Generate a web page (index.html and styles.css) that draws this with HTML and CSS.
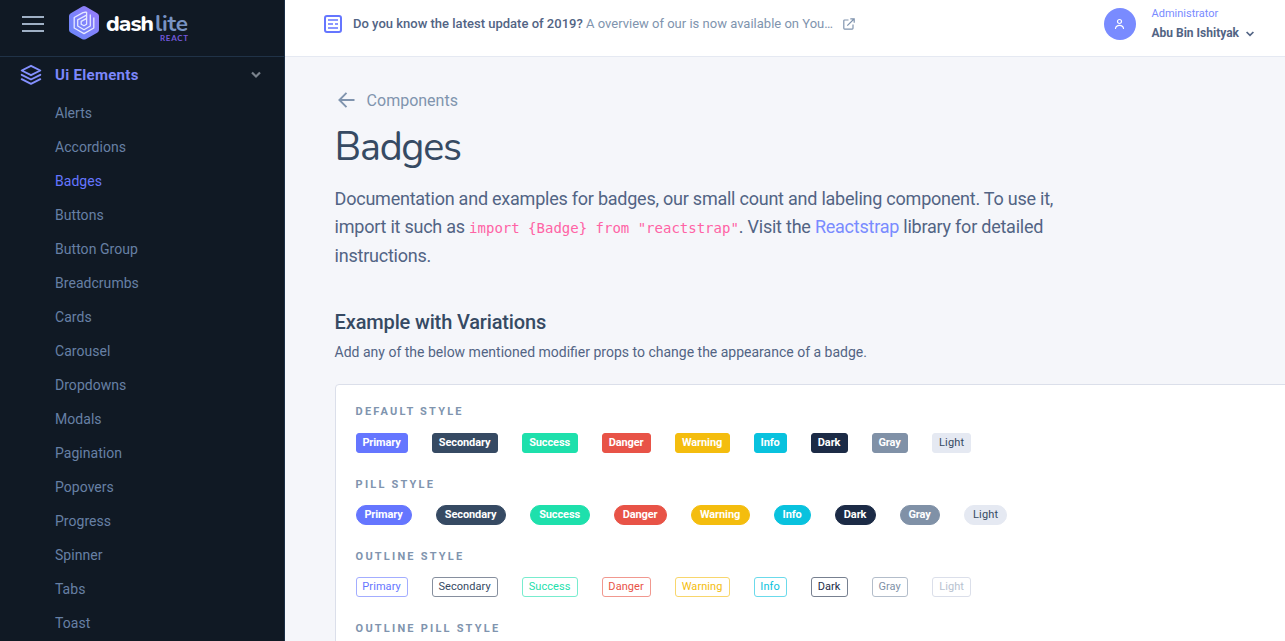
FILE: index.html
```
<!DOCTYPE html>
<html lang="en">
<head>
<meta charset="utf-8">
<title>Badges - DashLite</title>
<link rel="stylesheet" href="styles.css">
</head>
<body>
<div class="app">
  <aside class="sidebar">
    <div class="brand">
      <div class="burger"><i></i><i></i><i></i></div>
      <svg class="logo" width="122" height="40" viewBox="0 0 122 40">
        <defs><linearGradient id="hex" x1="1" y1="0" x2="0" y2="1"><stop offset="0" stop-color="#9b7cfb"/><stop offset=".55" stop-color="#7c83fb"/><stop offset="1" stop-color="#6a86f8"/></linearGradient></defs>
        <path d="M14.3 1.500Q16 .6 17.700 1.500L29.200 8.300Q31 9.300 31 11V25Q31 26.700 29.200 27.700L17.700 34.200Q16 35 14.300 34.200L2.800 27.700Q1 26.700 1 25V11Q1 9.300 2.800 8.300Z" fill="url(#hex)"/>
        <g fill="none" stroke="#e6e9ff" stroke-width="1.300" stroke-linejoin="round">
          <path d="M18.600 7L15 7.600L6.200 12.500V23L16 28.600L25.800 23V12.500"/>
          <path d="M18.600 7V19.200L16 20.800L13.200 19.200V16.400L18.600 13.400"/>
          <path d="M18.600 10.200L9.700 14.800V21L16 24.700L22.300 21V9.500"/>
        </g>
        <text x="38" y="26" class="logo-dash" textLength="48">dash</text>
        <text x="87" y="26" class="logo-lite" textLength="33">lite</text>
        <text x="92" y="35.500" class="logo-sub" textLength="28">REACT</text>
      </svg>
    </div>
    <nav class="menu">
      <div class="menu-head">
        <svg width="22" height="22" viewBox="0 0 22 22" fill="none" stroke="#8490ff" stroke-width="1.900" stroke-linejoin="round" stroke-linecap="round"><path d="M11 1.800L20.300 6.500L11 11.200L1.700 6.500Z"/><path d="M1.700 10.800L11 15.500L20.300 10.800M1.700 15.200L11 19.900L20.300 15.200"/></svg>
        <span>Ui Elements</span>
        <svg class="chev" width="10" height="8" viewBox="0 0 10 8" fill="none" stroke="#7a828c" stroke-width="2.200"><path d="M1 1.500L5 5.500L9 1.500"/></svg>
      </div>
      <ul>
        <li>Alerts</li><li>Accordions</li><li class="active">Badges</li><li>Buttons</li><li>Button Group</li><li>Breadcrumbs</li><li>Cards</li><li>Carousel</li><li>Dropdowns</li><li>Modals</li><li>Pagination</li><li>Popovers</li><li>Progress</li><li>Spinner</li><li>Tabs</li><li>Toast</li>
      </ul>
    </nav>
  </aside>
  <main class="main">
    <header class="topbar">
      <svg width="18" height="18" viewBox="0 0 18 18" fill="none" stroke="#6576ff" stroke-width="2"><rect x="1" y="1" width="16" height="16" rx="2"/><path d="M4 5H14M4 9H9M11 9H14M4 13H14" stroke-width="1.700"/></svg>
      <p class="news"><b>Do you know the latest update of 2019?</b> A overview of our is now available on You…</p>
      <svg class="ext" width="12" height="12" viewBox="0 0 12 12" fill="none" stroke="#8094ae" stroke-width="1.200"><path d="M5.500 2H1.600Q.8 2 .8 2.800V10.300Q.8 11.100 1.600 11.100H9.200Q10 11.100 10 10.300V6.500M7.300.8H11.200V4.700M11 1L4.300 7.700"/></svg>
      <div class="user">
        <div class="avatar"><svg width="12" height="12" viewBox="0 0 12 12" fill="none" stroke="#fff" stroke-width="1.200" stroke-linecap="round"><circle cx="5.500" cy="3.500" r="2"/><path d="M1.500 10.500C1.800 8.500 3.200 7.300 5.500 7.300S9.200 8.500 9.500 10.500"/></svg></div>
        <div>
          <div class="role">Administrator</div>
          <div class="name">Abu Bin Ishityak<svg width="8" height="6" viewBox="0 0 8 6" fill="none" stroke="#526484" stroke-width="1.700"><path d="M.6 1L4 4.400L7.400 1"/></svg></div>
        </div>
      </div>
    </header>
    <section class="content">
      <div class="back"><svg width="17" height="16" viewBox="0 0 17 16" fill="none" stroke="#8094ae" stroke-width="1.900"><path d="M16.500 8H1.500M8.500 .8L1.400 8L8.500 15.200"/></svg><span>Components</span></div>
      <h1>Badges</h1>
      <p class="lead">Documentation and examples for badges, our small count and labeling component. To use it,<br>import it such as <code>import {Badge} from "reactstrap"</code>. Visit the <a>Reactstrap</a> library for detailed<br>instructions.</p>
      <h2>Example with Variations</h2>
      <p class="desc">Add any of the below mentioned modifier props to change the appearance of a badge.</p>
      <div class="card">
        <h3>Default Style</h3>
        <div class="badges">
          <span class="badge primary">Primary</span><span class="badge secondary">Secondary</span><span class="badge success">Success</span><span class="badge danger">Danger</span><span class="badge warning">Warning</span><span class="badge info">Info</span><span class="badge dark">Dark</span><span class="badge gray">Gray</span><span class="badge light">Light</span>
        </div>
        <h3>Pill Style</h3>
        <div class="badges pills">
          <span class="badge primary">Primary</span><span class="badge secondary">Secondary</span><span class="badge success">Success</span><span class="badge danger">Danger</span><span class="badge warning">Warning</span><span class="badge info">Info</span><span class="badge dark">Dark</span><span class="badge gray">Gray</span><span class="badge light">Light</span>
        </div>
        <h3>Outline Style</h3>
        <div class="badges outline">
          <span class="badge primary">Primary</span><span class="badge secondary">Secondary</span><span class="badge success">Success</span><span class="badge danger">Danger</span><span class="badge warning">Warning</span><span class="badge info">Info</span><span class="badge dark">Dark</span><span class="badge gray">Gray</span><span class="badge light">Light</span>
        </div>
        <h3>Outline Pill Style</h3>
      </div>
    </section>
  </main>
</div>
</body>
</html>
```
FILE: styles.css
```
* { box-sizing: border-box; margin: 0; padding: 0; }
body { font-family: Roboto, sans-serif; font-size: 14px; color: #526484; background: #f5f6fa; overflow: hidden; }
svg { display: block; flex: none; }
.app { display: flex; height: 641px; overflow: hidden; }
.sidebar { width: 285px; flex: none; background: #101924; border-right: 1px solid #1b2e45; }
.brand { height: 57px; border-bottom: 1px solid #203247; display: flex; align-items: flex-start; padding: 5px 0 0 22px; }
.burger { width: 22px; margin: 11px 24px 0 0; display: flex; flex-direction: column; gap: 5px; }
.burger i { height: 2px; background: #9fb0c5; }
.logo-dash, .logo-lite { font-family: Nunito, Lato, sans-serif; font-size: 22.500px; font-weight: 800; fill: #fff; }
.logo-lite { font-weight: 700; fill: #7893c3; }
.logo-sub { font-family: Lato, sans-serif; font-size: 8px; font-weight: 700; fill: #7358db; }
.menu-head { display: flex; align-items: center; height: 39px; padding: 0 23px 3px 20px; color: #7c87fb; font-size: 15px; font-weight: 700; letter-spacing: .3px; }
.menu-head span { margin-left: 13px; flex: 1; }
.menu ul { list-style: none; }
.menu li { height: 34px; line-height: 34px; padding-left: 55px; color: #6780a5; letter-spacing: .04px; }
.menu li.active { color: #6576ff; }
.main { flex: 1; min-width: 0; }
.topbar { height: 57px; background: #fff; border-bottom: 1px solid #e5e9f2; display: flex; align-items: center; padding: 0 31px 8px 39px; }
.news { font-size: 13px; margin-left: 11px; padding-bottom: 2px; letter-spacing: .005px; color: #8094ae; white-space: nowrap; }
.news b { font-weight: 500; color: #526484; }
.ext { margin-left: 10px; }
.user { margin-left: auto; display: flex; align-items: center; }
.avatar { width: 32px; height: 32px; border-radius: 50%; background: #798bff; display: flex; align-items: center; justify-content: center; margin-right: 16px; }
.role { font-size: 11px; line-height: 16px; color: #798bff; padding-bottom: 2px; }
.name { font-size: 12px; line-height: 18px; font-weight: 700; display: flex; align-items: center; gap: 7px; padding-bottom: 1px; }
.name svg { margin-top: 2px; }
.content { padding: 31px 0 0 49.600px; }
.back { display: flex; align-items: center; height: 24px; font-size: 16px; color: #8094ae; gap: 12px; padding-left: 3px; }
h1 { font-family: Nunito, "Noto Sans", sans-serif; font-weight: 400; font-size: 39.500px; line-height: 44px; color: #364a63; letter-spacing: -1.300px; margin-top: 13px; }
.lead { font-size: 18px; line-height: 28.400px; margin-top: 15.500px; letter-spacing: -.235px; white-space: nowrap; }
code { font-family: "DejaVu Sans Mono", monospace; font-size: 14px; letter-spacing: 0; color: #ff63a5; }
a { color: #798bff; }
h2 { font-size: 20px; line-height: 22px; font-weight: 500; letter-spacing: -.15px; color: #364a63; margin-top: 39.800px; }
.desc { line-height: 23px; margin-top: 8px; }
.card { width: 1000px; height: 400px; margin-top: 20px; background: #fff; border: 1px solid #dbdfea; border-radius: 4px; padding: 20px; }
h3 { font-size: 11px; line-height: 13px; font-weight: 700; letter-spacing: 2.200px; text-transform: uppercase; color: #8094ae; }
.badges { display: flex; gap: 24px; margin: 14px 0 25px; }
.badges:first-of-type { margin-top: 15px; }
.badge { width: var(--w); height: 20px; line-height: 18px; text-align: center; border: 1px solid var(--c); border-radius: 3px; background: var(--c); color: #fff; font-size: 11px; font-weight: 700; letter-spacing: -.1px; }
.pills .badge { width: calc(var(--w) + 4px); border-radius: 10px; }
.primary { --w: 52px; --c: #6576ff; --b: #a3adff; }
.secondary { --w: 66px; --c: #364a63; --b: #868f9e; }
.success { --w: 56px; --c: #1ee0ac; --b: #78ecce; }
.danger { --w: 49px; --c: #e85347; --b: #f1988f; }
.warning { --w: 55px; --c: #f4bd0e; --b: #f8d66d; }
.info { --w: 33px; --c: #09c2de; --b: #6bdaeb; }
.dark { --w: 37px; --c: #1c2b46; --b: #778090; }
.gray { --w: 36px; --c: #8091a7; --b: #b3bdca; }
.light { --w: 39px; --c: #e5e9f2; --b: #dbdfea; }
.badge.light { color: #364a63; font-weight: 400; letter-spacing: .15px; padding-left: 1px; }
.outline .badge { background: #fff; color: var(--c); border-color: var(--b); font-weight: 400; letter-spacing: .08px; }
.outline .badge.light { color: #b7c2d0; }
```
